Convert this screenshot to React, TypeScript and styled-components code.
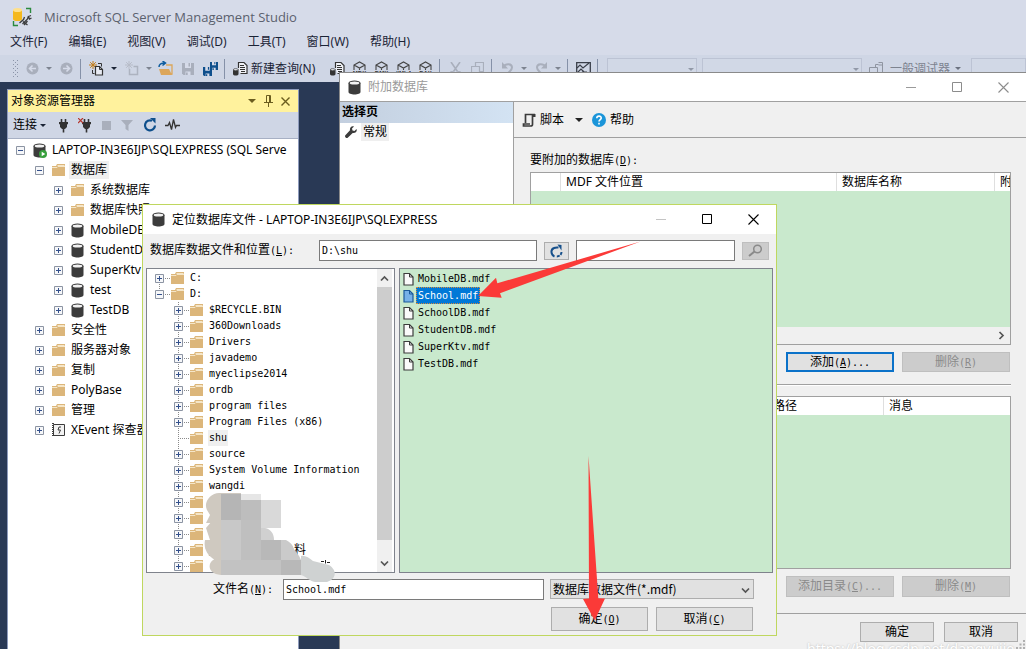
import React from "react";
import styled, { createGlobalStyle, css } from "styled-components";

const UI = `"Noto Sans", "Noto Sans CJK SC", sans-serif`;
const FIXED = `"DejaVu Sans Mono", "Noto Sans CJK SC", monospace`;
const GREEN = "#c9e9cd";

const Global = createGlobalStyle`
  *, *::before, *::after { box-sizing: border-box; }
  body { margin: 0; font: 12px/16px ${UI}; color: #000; }
  button, input, select { font: inherit; color: inherit; margin: 0; padding: 0; border-radius: 0; }
  ul { list-style: none; margin: 0; padding: 0; }
  svg { display: block; flex: none; }
`;

/* ---------- application shell ---------- */

const Desktop = styled.div`
  position: relative;
  display: flex;
  flex-direction: column;
  min-height: 100vh;
  overflow: hidden;
  background: #293955;
`;

const TopArea = styled.header`
  background: #d6dbe9;
  overflow: hidden;
`;

const AppTitle = styled.div`
  display: flex;
  align-items: center;
  gap: 10px;
  height: 33px;
  padding-left: 12px;
  color: #5b616e;
  font: 13px/16px "Open Sans", sans-serif;
`;

const MenuBar = styled.nav`
  display: flex;
  gap: 21px;
  height: 18px;
  padding-left: 10px;
`;

const PlainButton = styled.button`
  border: 0;
  background: none;
  white-space: nowrap;
`;

const MenuButton = styled(PlainButton)`
  color: #1b2436;
`;

const ToolStrip = styled.div`
  display: flex;
  align-items: center;
  height: 27px;
  margin-top: 4px;
  padding-left: 13px;
  background: #cfd6e5;
`;

const ToolButton = styled(PlainButton)<{ $w?: number }>`
  display: flex;
  flex: none;
  align-items: center;
  justify-content: center;
  width: ${(p) => p.$w ?? 22}px;
  height: 22px;
`;

const QueryButton = styled(PlainButton)`
  display: flex;
  flex: none;
  align-items: center;
  gap: 3px;
  width: 97px;
  height: 22px;
  padding-left: 4px;
  color: #1b2436;
`;

const Divider = styled.span`
  flex: none;
  width: 1px;
  height: 20px;
  margin: 0 4px 0 3px;
  background: #8591a8;
`;

const ComboBox = styled.span<{ $w?: number }>`
  position: relative;
  flex: ${(p) => (p.$w ? `0 0 ${p.$w}px` : "1 1 0")};
  margin-left: 5px;

  select {
    display: block;
    width: 100%;
    height: 22px;
    appearance: none;
    border: 1px solid #b4bccd;
    background: #d3d9e7;
  }
  svg {
    position: absolute;
    right: 3px;
    bottom: 9px;
  }
`;

const DebugLabel = styled.span`
  flex: none;
  color: #7d8390;
`;

const Workspace = styled.div`
  display: flex;
  flex: 1;
  padding: 7px 0 0 7px;
`;

/* ---------- object explorer ---------- */

const Explorer = styled.aside`
  display: flex;
  flex-direction: column;
  width: 292px;
  border: 1px solid #8e9bbc;
  border-bottom: 0;
  background: #fff;
  overflow: hidden;
`;

const ExplorerTitle = styled.div`
  display: flex;
  align-items: center;
  height: 22px;
  padding: 0 4px 0 3px;
  background: #fff29d;

  span {
    flex: 1;
  }
`;

const ExplorerTools = styled.div`
  display: flex;
  align-items: center;
  height: 27px;
  padding-left: 5px;
  border-bottom: 1px solid #a7b0c4;
  background: #cfd6e5;
`;

const ConnectButton = styled(PlainButton)`
  display: flex;
  align-items: center;
  gap: 3px;
  width: 38px;
`;

const ObjectList = styled.ul`
  padding-top: 1px;
`;

const ObjectRow = styled.li<{ $level: number }>`
  display: flex;
  align-items: center;
  height: 20px;
  padding-left: ${(p) => 8 + p.$level * 19}px;
  white-space: nowrap;
`;

const ExpandButton = styled(PlainButton)`
  flex: none;
  margin-right: 8px;
`;

const NodeIcon = styled.span`
  display: flex;
  flex: none;
  width: 17px;
`;

const NodeName = styled.span<{ $marked?: boolean }>`
  padding: 1px 2px;
  background: ${(p) => (p.$marked ? "#efefef" : "none")};
`;

/* ---------- windows ---------- */

const AttachWindow = styled.section`
  position: absolute;
  top: 72px;
  left: 339px;
  right: 0;
  border: 1px solid #8a8a8a;
  border-width: 1px 0 0 1px;
  background: #f0f0f0;
`;

const LocateWindow = styled.section`
  position: absolute;
  top: 204px;
  left: 142px;
  width: 635px;
  border: 1px solid #bfd75f;
  background: #f0f0f0;
`;

const WindowTitle = styled.div<{ $idle?: boolean }>`
  display: flex;
  align-items: center;
  gap: 6px;
  height: ${(p) => (p.$idle ? 28 : 29)}px;
  padding-left: ${(p) => (p.$idle ? 8 : 9)}px;
  background: #fff;
  color: ${(p) => (p.$idle ? "#9a9a9a" : "#000")};

  h2 {
    flex: 1;
    margin: 0;
    font-size: 12px;
    font-weight: 400;
  }
`;

const CaptionButton = styled(PlainButton)`
  display: flex;
  justify-content: center;
  width: 46px;
`;

const CaptionSet = styled.div`
  display: flex;
`;

const AttachBody = styled.div`
  display: flex;
  border-top: 1px solid #a0a0a0;
`;

const PageList = styled.div`
  flex: none;
  width: 174px;
  border-right: 1px solid #a0a0a0;
  background: #fff;

  h3 {
    height: 21px;
    margin: 0;
    padding: 2px;
    background: linear-gradient(90deg, #c3cfdf, #d3e3f3);
    font-size: 12px;
    font-weight: 700;
  }
`;

const PageItem = styled(PlainButton)`
  display: flex;
  align-items: center;
  gap: 4px;
  height: 18px;
  padding-left: 5px;
`;

const AttachMain = styled.div`
  flex: 1;
  min-width: 0;
`;

const ScriptBar = styled.div`
  display: flex;
  align-items: center;
  height: 36px;
  padding-left: 8px;
  border-bottom: 1px solid #a0a0a0;
`;

const ScriptButton = styled(PlainButton)<{ $w?: number }>`
  display: flex;
  align-items: center;
  gap: 4px;
  width: ${(p) => (p.$w ? `${p.$w}px` : "auto")};
`;

const AttachContent = styled.div`
  padding: 14px 15px 16px 16px;
`;

const Fixed = styled.span`
  font: 10px/16px ${FIXED};
`;

const GridFrame = styled.div<{ $gap: number }>`
  margin-top: ${(p) => p.$gap}px;
  border: 1px solid #a0a0a0;
  background: ${GREEN};
  overflow: hidden;
`;

const GridTable = styled.table`
  width: 100%;
  border-collapse: separate;
  border-spacing: 0;
  table-layout: fixed;

  th {
    height: 18px;
    padding: 0 5px;
    border-right: 1px solid #dfdfdf;
    background: #fff;
    font-weight: 400;
    text-align: left;
    white-space: nowrap;
    overflow: hidden;
  }
  th:last-child {
    border-right: 0;
    padding-right: 0;
  }
`;

const GridSpace = styled.div<{ $h: number }>`
  height: ${(p) => p.$h}px;
`;

const HorizontalBar = styled.div`
  display: flex;
  align-items: center;
  justify-content: flex-end;
  height: 17px;
  padding-right: 4px;
  background: #f0f0f0;
`;

const ButtonLine = styled.div<{ $right: number }>`
  display: flex;
  justify-content: flex-end;
  gap: 8px;
  padding: 7px ${(p) => p.$right}px 0 0;
`;

const PushButton = styled.button<{ $w: number; $h: number; $focus?: boolean }>`
  width: ${(p) => p.$w}px;
  height: ${(p) => p.$h}px;
  border: 1px solid #adadad;
  background: #e1e1e1;
  line-height: 16px;
  white-space: nowrap;

  ${(p) => p.$focus && css`border: 2px solid #0b72c9;`}
  &:disabled {
    border-color: #bfbfbf;
    background: #cccccc;
    color: #8a8a8a;
  }
`;

const Rule = styled.hr`
  height: 2px;
  margin: 12px 0 0;
  border: 0;
  border-top: 1px solid #a0a0a0;
  background: #fff;
`;

const AttachFooter = styled.div`
  display: flex;
  justify-content: flex-end;
  gap: 10px;
  padding: 8px 8px 8px 0;
  border-top: 1px solid #a0a0a0;
`;

const SizeGrip = styled.span`
  position: absolute;
  right: 0;
  bottom: 0;
`;

/* ---------- locate window ---------- */

const TextBox = styled.input<{ $grow: number }>`
  flex: ${(p) => p.$grow} 1 0;
  min-width: 0;
  height: 21px;
  padding: 0 2px;
  border: 1px solid #7a7a7a;
  background: #fff;
  font: 10px/16px ${FIXED};
`;

const PathRow = styled.div`
  display: flex;
  align-items: center;
  gap: 7px;
  padding: 6px 7px 7px;

  label {
    flex: none;
    width: 162px;
  }
`;

const IconButton = styled.button<{ $w: number }>`
  display: flex;
  flex: none;
  align-items: center;
  justify-content: center;
  width: ${(p) => p.$w}px;
  height: 18px;
  border: 1px solid #adadad;
  background: #e1e1e1;

  &:disabled {
    background: #cccccc;
    border-color: #bfbfbf;
  }
`;

const Panes = styled.div`
  display: flex;
  gap: 4px;
  height: 305px;
  padding: 0 3px;
`;

const FolderPane = styled.div`
  display: flex;
  position: relative;
  width: 249px;
  border: 1px solid #7f838c;
  background: #fff;
`;

const FolderList = styled.ul`
  flex: 1;
  padding-top: 1px;
  overflow: hidden;
`;

const FolderRow = styled.li<{ $level: number }>`
  display: flex;
  align-items: center;
  height: 16px;
  padding-left: ${(p) => 8 + p.$level * 19}px;
  white-space: nowrap;
`;

const FolderName = styled.span<{ $marked?: boolean }>`
  margin-left: 4px;
  padding: 0 1px;
  background: ${(p) => (p.$marked ? "#efefef" : "none")};
  font: 10px/16px ${FIXED};
`;

const NameTail = styled.span`
  margin-left: 78px;
`;

const VerticalBar = styled.div`
  display: flex;
  flex-direction: column;
  align-items: center;
  width: 15px;
  margin-right: 2px;
  background: #f0f0f0;

  button {
    display: flex;
    align-items: center;
    justify-content: center;
    width: 15px;
    height: 18px;
  }
`;

const Thumb = styled.span`
  width: 15px;
  height: 253px;
  margin-bottom: auto;
  background: #cdcdcd;
`;

const Mosaic = styled.span`
  position: absolute;
  left: 56px;
  top: 223px;
`;

const FileList = styled.ul`
  flex: 1;
  padding: 1px 0 0 3px;
  border: 1px solid #7f838c;
  background: ${GREEN};
`;

const FileRow = styled.li<{ $active?: boolean }>`
  display: flex;
  align-items: center;
  gap: 2px;
  height: 17px;

  span {
    padding: 0 1px;
    border: 1px ${(p) => (p.$active ? "dotted #d98b3a" : "solid transparent")};
    background: ${(p) => (p.$active ? "#0078d7" : "none")};
    color: ${(p) => (p.$active ? "#fff" : "#000")};
    font: 10px/15px ${FIXED};
  }
`;

const NameRow = styled.div`
  display: flex;
  padding: 6px 22px 0 70px;

  label {
    flex: none;
    width: 70px;
    line-height: 20px;
  }
`;

const TypeBox = styled.span`
  position: relative;
  flex: none;
  width: 204px;
  margin-left: 6px;

  select {
    display: block;
    width: 100%;
    height: 20px;
    padding-left: 2px;
    appearance: none;
    border: 1px solid #adadad;
    background: #e1e1e1;
    font: 12px/16px "Noto Sans CJK SC", sans-serif;
  }
  svg {
    position: absolute;
    right: 4px;
    top: 7px;
  }
`;

const DialogButtons = styled(ButtonLine)`
  padding-bottom: 4px;
`;

const Arrows = styled.svg`
  position: absolute;
  left: 470px;
  top: 236px;
  pointer-events: none;
`;

const Watermark = styled.span`
  position: absolute;
  left: 807px;
  top: 640px;
  color: #fff;
  font-size: 14px;
  line-height: 18px;
  text-shadow: 0 0 2px #b0b0b0;
  white-space: nowrap;
`;

/* ---------- drawings ---------- */

const Caret = ({ color = "#1b2436", w = 6 }: { color?: string; w?: number }) => (
  <svg width={w} height={w / 2} viewBox="0 0 6 3"><path d="M0 0h6L3 3z" fill={color} /></svg>
);

const Chevron = ({ turn = 0, size = 9 }: { turn?: number; size?: number }) => (
  <svg width={size} height={size} viewBox="0 0 9 9">
    <path d="M1 2.5 4.5 6 8 2.5" transform={`rotate(${turn} 4.5 4.5)`} fill="none" stroke="#555" strokeWidth="1.7" />
  </svg>
);

const Folder = ({ w = 14 }: { w?: number }) => (
  <svg width={w} height="12" viewBox="0 0 14 12">
    <path d="M0 2h4l1-2h8v12H0z" fill="#dcb67a" />
    <path d="M5.500 1.500h7M0 3.500h5l1-1h7" stroke="#f5e6c8" fill="none" />
  </svg>
);

const Cylinder = ({ run }: { run?: boolean }) => (
  <svg width="14" height="15" viewBox="0 0 14 15">
    <path d="M.5 3v9c0 1.500 2.700 2.500 6 2.500s6-1 6-2.500V3z" fill="#3c3c3c" />
    <ellipse cx="6.500" cy="3" rx="6" ry="2.500" fill="#3c3c3c" />
    <ellipse cx="6.500" cy="3" rx="4.800" ry="1.500" fill="#f2f2f2" />
    {run && <circle cx="10" cy="11" r="4" fill="#37a03c" />}
    {run && <path d="M8.700 8.800v4.400l3.600-2.200z" fill="#fff" />}
  </svg>
);

const EventIcon = () => (
  <svg width="14" height="14" viewBox="0 0 14 14">
    <path d="M1.500 1.500h11v11h-11z" fill="#f2f2f2" stroke="#3c3c3c" />
    <path d="M1 0v14" stroke="#3c3c3c" strokeWidth="2" strokeDasharray="1 1" />
    <path d="M9 4H7L6 7h2.500L7 10.500" fill="none" stroke="#3c3c3c" />
  </svg>
);

const Box = ({ open }: { open?: boolean }) => (
  <svg width="9" height="9" viewBox="0 0 9 9">
    <path d="M.5.5h8v8h-8z" fill="#f6f7f9" stroke="#8c94a3" />
    <path d={open ? "M2 4.500h5" : "M2 4.500h5M4.500 2v5"} stroke="#33508c" />
  </svg>
);

const Branch = ({ kind }: { kind: "top" | "open" | "more" | "leaf" }) => (
  <svg width="16" height="16" viewBox="0 0 16 16">
    <g stroke="#8a8a8a" strokeDasharray="1 1" fill="none">
      <path d={kind === "top" ? "M4.500 8v8" : kind === "open" ? "M4.500 0v8" : "M4.500 0v16"} />
      <path d="M4 8.500h12" />
    </g>
    {kind !== "leaf" && (
      <g transform="translate(0 4)">
        <path d="M.5.5h8v8h-8z" fill="#f6f7f9" stroke="#8c94a3" />
        <path d={kind === "open" ? "M2 4.500h5" : "M2 4.500h5M4.500 2v5"} stroke="#33508c" />
      </g>
    )}
  </svg>
);

const FileIcon = ({ active }: { active?: boolean }) => (
  <svg width="11" height="14" viewBox="0 0 11 14">
    <path
      d="M1 1.500h5.500l3.500 3.500v8H1z"
      fill={active ? "#76b1e8" : "#fafafa"}
      stroke={active ? "#1b5a9a" : "#3c3c3c"}
      strokeWidth="1.200"
    />
    <path d="M6.500 1.500V5H10" fill="none" stroke={active ? "#1b5a9a" : "#3c3c3c"} />
  </svg>
);

const AppLogo = () => (
  <svg width="22" height="20" viewBox="0 0 22 20">
    <path d="M1 3v9c0 1.500 2 2 4.500 2s4.500-.5 4.500-2V3z" fill="#f5b81d" />
    <ellipse cx="5.500" cy="3" rx="4.500" ry="2" fill="#ffe08a" />
    <path d="M14 1.500h4.500V6M1.500 14v4.500H6" fill="none" stroke="#2b8a3e" strokeWidth="1.400" />
    <path d="m7.500 16 4-3.500 1-2.500M10.500 17l5-5 1-3M19 8.500l-2.500 1 1 2.500 2-1M11 14.500l4.500 3.500M15.500 14l-3.500 4" stroke="#3c3c3c" strokeWidth="1.300" fill="none" />
  </svg>
);

const NavCircle = ({ back }: { back?: boolean }) => (
  <svg width="13" height="13" viewBox="0 0 13 13">
    <circle cx="6.500" cy="6.500" r="6" fill="#a9afbc" />
    <path d={back ? "M10 6.500H4M6.500 3.500l-3 3 3 3" : "M3 6.500h6M6.500 3.500l3 3-3 3"} stroke="#d6dbe9" strokeWidth="1.600" fill="none" />
  </svg>
);

const NewItem = ({ muted }: { muted?: boolean }) => {
  const ink = muted ? "#adb3c0" : "#333";
  return (
    <svg width="15" height="15" viewBox="0 0 15 15">
      <path d="M4 0v8M0 4h8M1.200 1.200l5.600 5.600M6.800 1.200 1.200 6.800" stroke={muted ? "#b7bcc8" : "#c27d1a"} />
      {muted ? (
        <path d="M4.500 8v5.500h8v-8H8.500" fill="none" stroke={ink} strokeWidth="1.500" />
      ) : (
        <>
          <path d="M9 2.500h3.500v3M3.500 9v3.500h2" fill="none" stroke={ink} />
          <path d="M6.500 5.500h4l3 3v5.500h-7z" fill="#e8ebf3" stroke={ink} strokeWidth="1.200" />
          <path d="M10.500 5.500v3h3" fill="none" stroke={ink} />
        </>
      )}
    </svg>
  );
};

const OpenIcon = () => (
  <svg width="16" height="15" viewBox="0 0 16 15">
    <path d="M8 4h6v9h-2" fill="none" stroke="#dca65a" strokeWidth="1.300" />
    <path d="M1 8h10l3 6H3z" fill="#dca65a" />
    <path d="M1 6c0-3 2-4 6-4M4.500 0 7.500 2 4.500 4.500" fill="none" stroke="#0e5c9e" strokeWidth="1.500" />
  </svg>
);

const Floppy = ({ x = 0, y = 0, s = 12, fill = "#a9afbc" }: { x?: number; y?: number; s?: number; fill?: string }) => (
  <g transform={`translate(${x} ${y}) scale(${s / 12})`}>
    <path d="M0 0h12v12H1.500L0 10.500z" fill={fill} />
    <path d="M3 0h6v5H3zM3.500 8.500h5V12h-5z" fill="#d6dbe9" />
    <path d="M6.500 0H8v3.500H6.500zM4 9.500h1.700V12H4z" fill={fill} />
  </g>
);

const QueryIcon = () => (
  <svg width="15" height="15" viewBox="0 0 15 15">
    <path d="M5.500 7V1.500h5.500l3 3v8H7.500" fill="#f0f2f7" stroke="#333" strokeWidth="1.200" />
    <path d="M7 4.500h4M7 6.500h5M7 8.500h5M8 10.500h4" stroke="#333" />
    <path d="M0 8.500v4.500c0 2 5.500 2 5.500 0V8.500z" fill="#333" />
    <ellipse cx="2.700" cy="8.700" rx="2.400" ry="1" fill="#f0f2f7" stroke="#333" strokeWidth=".7" />
  </svg>
);

const CubeIcon = ({ text }: { text: string }) => (
  <svg width="15" height="16" viewBox="0 0 15 16">
    <path d="M2 9V4L7.500 1 13 4V9M2 4 7.500 7 13 4M7.500 7V9" fill="none" stroke="#444" strokeWidth="1.100" />
    <text x="7.500" y="14" textAnchor="middle" fontSize="6" fontWeight="700" fontFamily="Liberation Sans, sans-serif" fill="#333">{text}</text>
  </svg>
);

const CutIcon = () => (
  <svg width="13" height="14" viewBox="0 0 13 14">
    <path d="m2 0 6.500 9.500M11 0 4.500 9.500" stroke="#a9afbc" strokeWidth="1.600" />
    <circle cx="3" cy="11.500" r="1.800" fill="none" stroke="#a9afbc" strokeWidth="1.300" />
    <circle cx="10" cy="11.500" r="1.800" fill="none" stroke="#a9afbc" strokeWidth="1.300" />
  </svg>
);

const CopyIcon = () => (
  <svg width="13" height="14" viewBox="0 0 13 14">
    <path d="M4.500 4.500v-4h8v9h-4M.5 4.500h8v9h-8z" fill="none" stroke="#a9afbc" strokeWidth="1.200" />
  </svg>
);

const TurnArrow = ({ flip }: { flip?: boolean }) => (
  <svg width="13" height="14" viewBox="0 0 13 14">
    <g transform={flip ? "translate(13 0) scale(-1 1)" : undefined}>
      <path d="M2 5c3-4 9-3.500 9 .5 0 3-3 4-5 7" fill="none" stroke="#a9afbc" strokeWidth="2" />
      <path d="M1 0v6.500h6z" fill="#a9afbc" />
    </g>
  </svg>
);

const ChartIcon = () => (
  <svg width="15" height="14" viewBox="0 0 15 14">
    <path d="M.7.7h13.600v12.600H.7z" fill="none" stroke="#3a3f4a" strokeWidth="1.300" />
    <path d="m1 6 3-3 3 3 6-5M1 11l4-4 3 3 3 0M4 12l4-3" fill="none" stroke="#3a3f4a" strokeWidth="1.200" />
  </svg>
);

const DebugIcon = () => (
  <svg width="14" height="14" viewBox="0 0 14 14">
    <path d="M.5 5.500h8v6h-8zM6.500 5V2.500h3M9.500.5h4v11h-3M9.500 3h4" fill="none" stroke="#8f95a1" />
  </svg>
);

const GripDots = () => (
  <svg width="8" height="20" viewBox="0 0 8 20">
    <path d="M.5 1v18M4.500 1v18" stroke="#8b94a8" strokeDasharray="1 3" />
    <path d="M2.500 3v16" stroke="#8b94a8" strokeDasharray="1 3" />
  </svg>
);

const Plug = ({ cut }: { cut?: boolean }) => (
  <svg width="15" height="15" viewBox="0 0 15 15">
    <path d="M6.500 1v4M10.500 1v4M8.500 10v4.500" stroke="#333" strokeWidth="1.600" />
    <path d="M4 4h9v2l-1 .5V9l-2 2H7L5 9V6.500L4 6z" fill="#333" />
    {cut && <path d="m0 0 5 5M5 0 0 5" stroke="#b5352c" strokeWidth="1.200" />}
  </svg>
);

const RefreshIcon = ({ size = 14 }: { size?: number }) => (
  <svg width={size} height={size} viewBox="0 0 14 14">
    <path d="M9 2.800A5 5 0 1 0 12 7.500" fill="none" stroke="#0e4f8c" strokeWidth="2.200" />
    <path d="M7 0h5.500v5.500z" fill="#0e4f8c" />
  </svg>
);

const DashedRefresh = () => (
  <svg width="13" height="14" viewBox="0 0 13 14">
    <path d="M4.500 12.500C.5 10.500.5 5.500 4 4c1.500-.7 3-.7 4.500-.5" fill="none" stroke="#17508b" strokeWidth="2" />
    <path d="M7.500.5 11.500 1v5.500z" fill="#17508b" />
    <path d="M11.500 8A4.600 4.600 0 0 1 6.500 12.500" fill="none" stroke="#17508b" strokeWidth="2" strokeDasharray="3 1" />
  </svg>
);

const Magnifier = () => (
  <svg width="15" height="13" viewBox="0 0 15 13">
    <circle cx="9.500" cy="5" r="3.800" fill="none" stroke="#8a8a8a" strokeWidth="1.500" />
    <path d="M6.500 7.500 1 12" stroke="#8a8a8a" strokeWidth="2" />
  </svg>
);

const Pulse = () => (
  <svg width="15" height="12" viewBox="0 0 15 12">
    <path d="M0 6.500h3l1.500-3 2 7 2-10 2 8 1-2H15" fill="none" stroke="#333" strokeWidth="1.300" />
  </svg>
);

const Wrench = () => (
  <svg width="12" height="12" viewBox="0 0 12 12">
    <path d="M11.500 3 9.500 5 7.500 4.500 7 2.500 9 .5C6.500-.5 4.500 1.500 5 4.300L.6 9a1.600 1.600 0 0 0 2.400 2.400L7.700 7C10.500 7.500 12.500 5.500 11.500 3z" fill="#3c3c3c" />
  </svg>
);

const Scroll = () => (
  <svg width="14" height="14" viewBox="0 0 14 14">
    <path d="M3.500 10V1.500H13M10.500 2v9.500c0 1-1 1.500-2 1.500H1.500v-2H8" fill="none" stroke="#3c3c3c" strokeWidth="1.700" />
    <path d="M11 1h2.500v3H11z" fill="#3c3c3c" />
  </svg>
);

const HelpIcon = () => (
  <svg width="14" height="14" viewBox="0 0 14 14">
    <circle cx="7" cy="7" r="7" fill="#1b95d9" />
    <path d="M4.800 5.300c0-3 4.600-2.800 4.400-.2C9.100 6.500 7 6.700 7 8.600M7 9.800v1.700" fill="none" stroke="#fff" strokeWidth="1.600" />
  </svg>
);

const WindowControls = ({ color, dim }: { color: string; dim: string }) => (
  <CaptionSet>
    <CaptionButton aria-label="最小化">
      <svg width="11" height="11" viewBox="0 0 11 11"><path d="M0 5.500h10" stroke={dim} /></svg>
    </CaptionButton>
    <CaptionButton aria-label="最大化">
      <svg width="11" height="11" viewBox="0 0 11 11"><path d="M.5.5h9v9h-9z" fill="none" stroke={color} /></svg>
    </CaptionButton>
    <CaptionButton aria-label="关闭">
      <svg width="11" height="11" viewBox="0 0 11 11"><path d="m.5.5 10 10M10.500.5l-10 10" stroke={color} strokeWidth="1.100" /></svg>
    </CaptionButton>
  </CaptionSet>
);

/* ---------- data ---------- */

const menus = ["文件(F)", "编辑(E)", "视图(V)", "调试(D)", "工具(T)", "窗口(W)", "帮助(H)"];

type Node = { name: string; level: number; icon: "server" | "folder" | "db" | "event"; open?: boolean; marked?: boolean };

const objects: Node[] = [
  { name: "LAPTOP-IN3E6IJP\\SQLEXPRESS (SQL Serve", level: 0, icon: "server", open: true },
  { name: "数据库", level: 1, icon: "folder", open: true, marked: true },
  { name: "系统数据库", level: 2, icon: "folder" },
  { name: "数据库快照", level: 2, icon: "folder" },
  { name: "MobileDB", level: 2, icon: "db" },
  { name: "StudentDB", level: 2, icon: "db" },
  { name: "SuperKtv", level: 2, icon: "db" },
  { name: "test", level: 2, icon: "db" },
  { name: "TestDB", level: 2, icon: "db" },
  { name: "安全性", level: 1, icon: "folder" },
  { name: "服务器对象", level: 1, icon: "folder" },
  { name: "复制", level: 1, icon: "folder" },
  { name: "PolyBase", level: 1, icon: "folder" },
  { name: "管理", level: 1, icon: "folder" },
  { name: "XEvent 探查器", level: 1, icon: "event" },
];

const folders = [
  "$RECYCLE.BIN", "360Downloads", "Drivers", "javademo", "myeclipse2014", "ordb", "program files",
  "Program Files (x86)", "shu", "source", "System Volume Information", "wangdi", "", "", "", "_", "",
];

const files = ["MobileDB.mdf", "School.mdf", "SchoolDB.mdf", "StudentDB.mdf", "SuperKtv.mdf", "TestDB.mdf"];

const nodeIcon = (icon: Node["icon"]) =>
  icon === "folder" ? <Folder /> : icon === "event" ? <EventIcon /> : <Cylinder run={icon === "server"} />;

const Key = ({ k, tail = "" }: { k: string; tail?: string }) => (
  <Fixed>(<u>{k}</u>){tail}</Fixed>
);

/* ---------- parts ---------- */

const MainToolbar = () => (
  <ToolStrip>
    <GripDots />
    <ToolButton aria-label="后退"><NavCircle back /></ToolButton>
    <ToolButton $w={12} aria-label="后退列表"><Caret color="#7d8390" /></ToolButton>
    <ToolButton aria-label="前进"><NavCircle /></ToolButton>
    <Divider />
    <ToolButton aria-label="新建项目"><NewItem /></ToolButton>
    <ToolButton $w={14} aria-label="新建列表"><Caret /></ToolButton>
    <ToolButton aria-label="添加项"><NewItem muted /></ToolButton>
    <ToolButton $w={12} aria-label="添加列表"><Caret color="#7d8390" /></ToolButton>
    <ToolButton aria-label="打开"><OpenIcon /></ToolButton>
    <ToolButton aria-label="保存"><svg width="12" height="12"><Floppy /></svg></ToolButton>
    <ToolButton aria-label="全部保存">
      <svg width="15" height="14"><Floppy x={7} s={8} fill="#0e4f8c" /><Floppy y={5} s={9} fill="#0e4f8c" /></svg>
    </ToolButton>
    <Divider />
    <QueryButton><QueryIcon />新建查询(N)</QueryButton>
    <ToolButton aria-label="数据库引擎查询"><QueryIcon /></ToolButton>
    {["MDX", "DMX", "XMLA", "DAX"].map((t) => (
      <ToolButton key={t} aria-label={t}><CubeIcon text={t} /></ToolButton>
    ))}
    <Divider />
    <ToolButton aria-label="剪切"><CutIcon /></ToolButton>
    <ToolButton aria-label="复制"><CopyIcon /></ToolButton>
    <Divider />
    <ToolButton aria-label="撤消"><TurnArrow /></ToolButton>
    <ToolButton $w={12} aria-label="撤消列表"><Caret color="#7d8390" /></ToolButton>
    <ToolButton aria-label="重做"><TurnArrow flip /></ToolButton>
    <ToolButton $w={12} aria-label="重做列表"><Caret color="#7d8390" /></ToolButton>
    <Divider />
    <ToolButton aria-label="活动监视器"><ChartIcon /></ToolButton>
    <Divider />
    <ComboBox $w={90}><select aria-label="配置" disabled /><Caret color="#9299a8" /></ComboBox>
    <ComboBox $w={160}><select aria-label="平台" disabled /><Caret color="#9299a8" /></ComboBox>
    <ToolButton $w={28} aria-label="调试"><DebugIcon /></ToolButton>
    <DebugLabel>一般调试器</DebugLabel>
    <ToolButton $w={16} aria-label="调试器列表"><Caret color="#6c7280" /></ToolButton>
    <ComboBox><select aria-label="进程" disabled /></ComboBox>
  </ToolStrip>
);

const ObjectExplorer = () => (
  <Explorer>
    <ExplorerTitle>
      <span>对象资源管理器</span>
      <ToolButton $w={17} aria-label="窗口位置"><Caret color="#6b5d1f" w={8} /></ToolButton>
      <ToolButton $w={17} aria-label="自动隐藏">
        <svg width="9" height="12" viewBox="0 0 9 12"><path d="M2.500 7V.5h4V7M5.500.5V7M0 7.500h9M4.500 8v4" fill="none" stroke="#6b5d1f" /></svg>
      </ToolButton>
      <ToolButton $w={17} aria-label="关闭面板">
        <svg width="9" height="9" viewBox="0 0 9 9"><path d="m.5.5 8 8M8.500.5l-8 8" stroke="#6b5d1f" strokeWidth="1.400" /></svg>
      </ToolButton>
    </ExplorerTitle>
    <ExplorerTools>
      <ConnectButton>连接<Caret /></ConnectButton>
      <ToolButton aria-label="连接对象资源管理器"><Plug /></ToolButton>
      <ToolButton $w={24} aria-label="断开连接"><Plug cut /></ToolButton>
      <ToolButton $w={18} aria-label="停止"><svg width="9" height="9"><path d="M0 0h9v9H0z" fill="#a9afbc" /></svg></ToolButton>
      <ToolButton $w={24} aria-label="筛选"><svg width="12" height="11" viewBox="0 0 12 11"><path d="M0 0h12L7.500 5v6l-3-2V5z" fill="#a9afbc" /></svg></ToolButton>
      <ToolButton aria-label="刷新"><RefreshIcon /></ToolButton>
      <ToolButton aria-label="活动"><Pulse /></ToolButton>
    </ExplorerTools>
    <ObjectList>
      {objects.map((n) => (
        <ObjectRow key={n.name} $level={n.level}>
          <ExpandButton aria-label={n.open ? "折叠" : "展开"}><Box open={n.open} /></ExpandButton>
          <NodeIcon>{nodeIcon(n.icon)}</NodeIcon>
          <NodeName $marked={n.marked}>{n.name}</NodeName>
        </ObjectRow>
      ))}
    </ObjectList>
  </Explorer>
);

const AttachDatabases = () => (
  <AttachWindow>
    <WindowTitle $idle>
      <Cylinder />
      <h2>附加数据库</h2>
      <WindowControls color="#8c8c8c" dim="#9a9a9a" />
    </WindowTitle>
    <AttachBody>
      <PageList>
        <h3>选择页</h3>
        <PageItem><Wrench /><NodeName $marked>常规</NodeName></PageItem>
      </PageList>
      <AttachMain>
        <ScriptBar>
          <ScriptButton $w={53}><Scroll />脚本</ScriptButton>
          <ScriptButton $w={17} aria-label="脚本选项"><Caret w={8} color="#222" /></ScriptButton>
          <ScriptButton><HelpIcon />帮助</ScriptButton>
        </ScriptBar>
        <AttachContent>
          <div>要附加的数据库<Key k="D" tail=":" /></div>
          <GridFrame $gap={3}>
            <GridTable>
              <colgroup><col width="30" /><col /><col width="158" /><col width="15" /></colgroup>
              <thead><tr><th aria-label="状态" /><th>MDF 文件位置</th><th>数据库名称</th><th>附</th></tr></thead>
            </GridTable>
            <GridSpace $h={136} />
            <HorizontalBar><Chevron turn={-90} /></HorizontalBar>
          </GridFrame>
          <ButtonLine $right={1}>
            <PushButton $w={108} $h={20} $focus>添加<Key k="A" tail="..." /></PushButton>
            <PushButton $w={108} $h={20} disabled>删除<Key k="R" /></PushButton>
          </ButtonLine>
          <Rule />
          <GridFrame $gap={10}>
            <GridTable>
              <colgroup><col /><col width="80" /><col width="164" /><col width="126" /></colgroup>
              <thead><tr><th>原始文件名</th><th>文件类型</th><th>当前文件路径</th><th>消息</th></tr></thead>
            </GridTable>
            <GridSpace $h={153} />
          </GridFrame>
          <ButtonLine $right={1}>
            <PushButton $w={108} $h={21} disabled>添加目录<Key k="C" tail="..." /></PushButton>
            <PushButton $w={108} $h={21} disabled>删除<Key k="M" /></PushButton>
          </ButtonLine>
        </AttachContent>
      </AttachMain>
    </AttachBody>
    <AttachFooter>
      <PushButton $w={74} $h={20}>确定</PushButton>
      <PushButton $w={74} $h={20}>取消</PushButton>
    </AttachFooter>
    <SizeGrip>
      <svg width="10" height="10" viewBox="0 0 10 10"><path d="M7 0h2v2H7zM7 3.500h2v2H7zM3.500 3.500h2v2h-2zM7 7h2v2H7zM3.500 7h2v2h-2zM0 7h2v2H0z" fill="#b0b0b0" /></svg>
    </SizeGrip>
  </AttachWindow>
);

const PixelCover = () => (
  <svg width="134" height="92" viewBox="0 0 134 92">
    <path d="M4 18C0 10 8 1 16 1h22v30H3l4-8zM3 36l6-7h30v28H2l5-9zM2 48h36v22H16C6 66 0 58 2 48zM12 67h28v16H18C4 82 4 70 12 67z" fill="#cfc9c0" />
    <path d="M18 2h20v26H18z" fill="#b5b5b5" />
    <path d="M38 2h20v26H38z" fill="#bdbdbd" />
    <path d="M38 2h20v6H38z" fill="#e6e6e6" />
    <path d="M58 8h20v28H58z" fill="#d9d9d9" />
    <path d="M18 28h20v42H18z" fill="#c8c8c8" />
    <path d="M38 28h20v42H38z" fill="#bfbfbf" />
    <path d="M58 36h4c6 1 9 6 9 12H58z" fill="#d0d0d0" />
    <path d="M58 48h20v20H58z" fill="#b8b8b8" />
    <path d="M78 48h5c4 2 7 5 8 9 2 3 5 6 7 11H78z" fill="#cacaca" />
    <path d="M18 68h60v15H18z" fill="#c2c2c2" />
    <path d="M78 68h21v15H78z" fill="#b8b8b8" />
    <path d="M98 64c4-1 8 2 12 5l16 4c8 5 8 14-2 17h-12c-6-1-8-5-14-7z" fill="#cfd2d2" />
    <path d="M118 69.500h3M122.500 68v3.500M124 70.500h3" stroke="#222" />
  </svg>
);

const LocateFiles = () => (
  <LocateWindow>
    <WindowTitle>
      <Cylinder />
      <h2>定位数据库文件 - LAPTOP-IN3E6IJP\SQLEXPRESS</h2>
      <WindowControls color="#000" dim="#c4c4c4" />
    </WindowTitle>
    <PathRow>
      <label htmlFor="path">数据库数据文件和位置<Key k="L" tail=":" /></label>
      <TextBox id="path" $grow={220} defaultValue="D:\shu" />
      <IconButton $w={25} aria-label="刷新"><DashedRefresh /></IconButton>
      <TextBox $grow={158} aria-label="搜索" />
      <IconButton $w={27} aria-label="查找" disabled><Magnifier /></IconButton>
    </PathRow>
    <Panes>
      <FolderPane>
        <FolderList>
          <FolderRow $level={0}><Branch kind="top" /><Folder /><FolderName>C:</FolderName></FolderRow>
          <FolderRow $level={0}><Branch kind="open" /><Folder /><FolderName>D:</FolderName></FolderRow>
          {folders.map((f, i) => (
            <FolderRow key={i} $level={1}>
              <Branch kind={f === "shu" ? "leaf" : "more"} />
              <Folder />
              <FolderName $marked={f === "shu"}>{f}</FolderName>
              {f === "_" && <NameTail>料</NameTail>}
            </FolderRow>
          ))}
        </FolderList>
        <VerticalBar>
          <PlainButton aria-label="向上滚动"><Chevron turn={180} /></PlainButton>
          <Thumb />
          <PlainButton aria-label="向下滚动"><Chevron /></PlainButton>
        </VerticalBar>
        <Mosaic><PixelCover /></Mosaic>
      </FolderPane>
      <FileList>
        {files.map((f) => (
          <FileRow key={f} $active={f === "School.mdf"}>
            <FileIcon active={f === "School.mdf"} />
            <span>{f}</span>
          </FileRow>
        ))}
      </FileList>
    </Panes>
    <NameRow>
      <label htmlFor="file">文件名<Key k="N" tail=":" /></label>
      <TextBox id="file" $grow={1} defaultValue="School.mdf" />
      <TypeBox>
        <select aria-label="文件类型"><option>数据库数据文件(*.mdf)</option></select>
        <Chevron />
      </TypeBox>
    </NameRow>
    <DialogButtons $right={23}>
      <PushButton $w={97} $h={24}>确定<Key k="O" /></PushButton>
      <PushButton $w={97} $h={24}>取消<Key k="C" /></PushButton>
    </DialogButtons>
  </LocateWindow>
);

export default function App() {
  return (
    <>
      <Global />
      <Desktop>
        <TopArea>
          <AppTitle><AppLogo />Microsoft SQL Server Management Studio</AppTitle>
          <MenuBar>{menus.map((m) => <MenuButton key={m}>{m}</MenuButton>)}</MenuBar>
          <MainToolbar />
        </TopArea>
        <Workspace><ObjectExplorer /></Workspace>
        <AttachDatabases />
        <Watermark>https://blog.csdn.net/dangyujie</Watermark>
        <LocateFiles />
        <Arrows width="172" height="386" viewBox="470 236 172 386">
          <path d="M478 296 496 277.700 497.300 283.300 640.500 241.500 500 293.300 501.700 297.700z" fill="#fb3a38" />
          <path d="M588.500 456 598.300 598.300 605 598.500 594.700 620.500 583 599 589 598.500z" fill="#fb3a38" />
        </Arrows>
      </Desktop>
    </>
  );
}
